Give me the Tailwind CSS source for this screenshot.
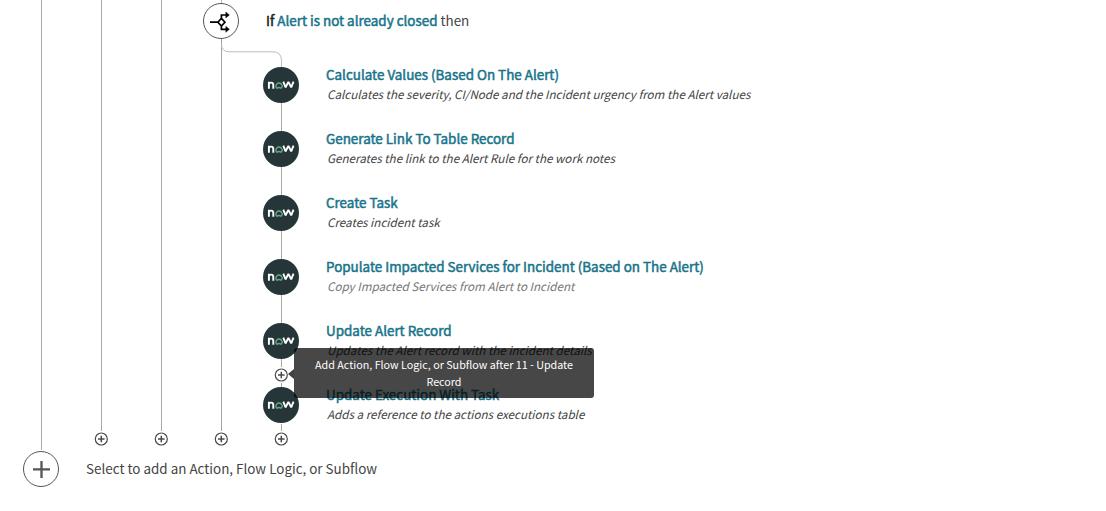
<!DOCTYPE html>
<html lang="en">
<head>
<meta charset="utf-8">
<title>Flow designer</title>
<script src="https://cdn.jsdelivr.net/npm/@tailwindcss/browser@4"></script>
</head>
<body class="bg-white w-[1106px] h-[511px] overflow-hidden font-['Noto_Sans_CJK_SC',sans-serif] text-[13.43px] text-[#444]">

<svg class="hidden">
  <symbol id="plus" viewBox="0 0 15 14">
    <circle cx="7.300" cy="7" r="6" fill="#fff" stroke="#4a4a4a" stroke-width="1.2"/>
    <path d="M7.300 3.700v6.600M4 7h6.600" stroke="#4a4a4a" stroke-width="1.5"/>
  </symbol>
  <symbol id="now" viewBox="0 0 36 36">
    <circle cx="18" cy="18" r="18" fill="#253538"/>
    <g fill="none" stroke="#fff" stroke-width="1.900">
      <path d="M5.900 21.700v-7M5.900 18c0-1.700.8-2.400 2.200-2.400s2.200.7 2.200 2.400v3.700"/>
      <path d="M20.300 14.700l2.300 5.600 2.800-5.400 2.800 5.400 2.300-5.600" stroke-linejoin="bevel"/>
    </g>
    <path d="M13.900 21.300a3.100 3.100 0 1 1 4.300 0q-2.150-1.500-4.300 0z" fill="none" stroke="#67a98a" stroke-width="1.400"/>
  </symbol>
</svg>

<main class="flex flex-col h-full">
  <div class="flex h-[451px] pl-[11px]">
    <div class="w-[60px] flex justify-center"><i class="w-px h-[450px] bg-[#aaa] ml-px"></i></div>
    <div class="w-[60px] flex flex-col items-center"><i class="w-px h-[431px] bg-[#a8a8ac] ml-px"></i><svg class="w-[15px] h-[14px] mt-px"><use href="#plus"/></svg></div>
    <div class="w-[60px] flex flex-col items-center"><i class="w-px h-[431px] bg-[#a8a8ac] ml-px"></i><svg class="w-[15px] h-[14px] mt-px"><use href="#plus"/></svg></div>
    <div class="w-[60px] flex flex-col items-center relative">
      <i class="w-px h-[3px] bg-[#b4b4b8] ml-px"></i>
      <svg class="size-9" viewBox="0 0 36 36">
        <circle cx="18" cy="18" r="17.5" fill="#fff" stroke="#555"/>
        <g fill="none" stroke="#000" stroke-width="1.700">
          <path d="M7 19.200h8M14.900 19.200l3.500-3.900 3.500 3.900-3.500 3.900zM18.400 15.300v-3.300h6M18.400 23.100v3.200h6"/>
        </g>
        <path d="M22.800 9l3.600 3-3.600 3zM22.800 23.300l3.600 3-3.600 3z" stroke="#000" stroke-width=".4"/>
      </svg>
      <i class="w-px h-[392px] bg-[#a4a4a8] ml-px"></i>
      <svg class="w-[15px] h-[14px] mt-px"><use href="#plus"/></svg>
      <svg class="absolute left-[30px] top-[40px] w-[62px] h-[27px]" fill="none" stroke="#bcbcc0"><path d="M.5 4q0 7.800 7.500 7.800h44q8.500 0 8.500 9v6.500"/></svg>
    </div>

    <div class="flex flex-col">
      <h2 class="h-[67px] pl-[15px] pt-[10px] leading-[20px] whitespace-pre"><span class="text-[#222] [-webkit-text-stroke:0.5px]">If </span><span class="text-[#17748a] [-webkit-text-stroke:0.5px]">Alert is not already closed</span> then</h2>

      <div class="flex h-16 pl-3 gap-[27px]">
        <div class="w-9 flex flex-col items-center"><svg class="size-9"><use href="#now"/></svg><i class="w-px h-7 bg-[#aaa] ml-px"></i></div>
        <div><h3 class="leading-[18px] -mt-[2px] mb-px text-[#17748a] [-webkit-text-stroke:0.5px]">Calculate Values (Based On The Alert)</h3><p class="italic text-[11.64px] leading-[20px] pl-px">Calculates the severity, CI/Node and the Incident urgency from the Alert values</p></div>
      </div>
      <div class="flex h-16 pl-3 gap-[27px]">
        <div class="w-9 flex flex-col items-center"><svg class="size-9"><use href="#now"/></svg><i class="w-px h-7 bg-[#aaa] ml-px"></i></div>
        <div><h3 class="leading-[18px] -mt-[2px] mb-px text-[#17748a] [-webkit-text-stroke:0.5px]">Generate Link To Table Record</h3><p class="italic text-[11.64px] leading-[20px] pl-px">Generates the link to the Alert Rule for the work notes</p></div>
      </div>
      <div class="flex h-16 pl-3 gap-[27px]">
        <div class="w-9 flex flex-col items-center"><svg class="size-9"><use href="#now"/></svg><i class="w-px h-7 bg-[#aaa] ml-px"></i></div>
        <div><h3 class="leading-[18px] -mt-[2px] mb-px text-[#17748a] [-webkit-text-stroke:0.5px]">Create Task</h3><p class="italic text-[11.64px] leading-[20px] pl-px">Creates incident task</p></div>
      </div>
      <div class="flex h-16 pl-3 gap-[27px]">
        <div class="w-9 flex flex-col items-center"><svg class="size-9"><use href="#now"/></svg><i class="w-px h-7 bg-[#aaa] ml-px"></i></div>
        <div><h3 class="leading-[18px] -mt-[2px] mb-px text-[#17748a] [-webkit-text-stroke:0.5px]">Populate Impacted Services for Incident (Based on The Alert)</h3><p class="italic text-[11.64px] leading-[20px] pl-px text-[#777]">Copy Impacted Services from Alert to Incident</p></div>
      </div>
      <div class="flex h-16 pl-3 gap-[27px] relative">
        <div class="w-9 flex flex-col items-center"><svg class="size-9"><use href="#now"/></svg><i class="w-px h-2 bg-[#aaa] ml-px mb-px"></i><svg class="w-[15px] h-[14px]"><use href="#plus"/></svg><i class="w-px h-[4px] bg-[#aaa] ml-px mt-px"></i></div>
        <div><h3 class="leading-[18px] -mt-[2px] mb-px text-[#17748a] [-webkit-text-stroke:0.5px]">Update Alert Record</h3><p class="italic text-[11.64px] leading-[20px] pl-px">Updates the Alert record with the incident details</p></div>
        <div class="absolute z-10 left-[37px] top-[25px] flex items-center">
          <i class="border-y-[5px] border-r-[6px] border-y-transparent border-r-black/75 mt-[2px]"></i>
          <div class="w-[300px] h-[50px] rounded-[3px] bg-black/72 text-white text-[10.74px] leading-[17px] text-center px-4 pt-2">Add Action, Flow Logic, or Subflow after 11 - Update Record</div>
        </div>
      </div>
      <div class="flex h-16 pl-3 gap-[27px]">
        <div class="w-9 flex flex-col items-center"><svg class="size-9 shrink-0"><use href="#now"/></svg><i class="w-px h-[7px] bg-[#aaa] ml-px mt-px shrink-0"></i><svg class="w-[15px] h-[14px] mt-px shrink-0"><use href="#plus"/></svg></div>
        <div><h3 class="leading-[18px] -mt-[2px] mb-px text-[#17748a] [-webkit-text-stroke:0.5px]">Update Execution With Task</h3><p class="italic text-[11.64px] leading-[20px] pl-px">Adds a reference to the actions executions table</p></div>
      </div>
    </div>
  </div>

  <div class="flex items-center pl-[23px] gap-[27px] h-9">
    <svg class="size-9" viewBox="0 0 36 36"><circle cx="18" cy="18" r="17.500" fill="#fff" stroke="#555"/><path d="M18.500 10v17M10 18.300h17" stroke="#555" stroke-width="2.300"/></svg>
    <span class="pb-[2px]">Select to add an Action, Flow Logic, or Subflow</span>
  </div>
</main>
</body>
</html>
